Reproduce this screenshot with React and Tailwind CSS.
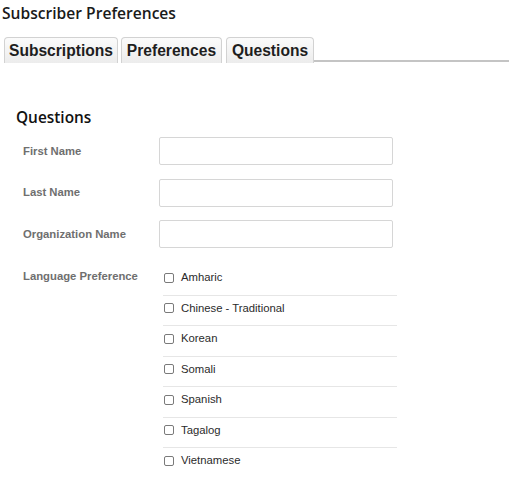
import React from "react";

const languages = [
  "Amharic",
  "Chinese - Traditional",
  "Korean",
  "Somali",
  "Spanish",
  "Tagalog",
  "Vietnamese",
];

const tabs = [
  { label: "Subscriptions", w: "w-[114px]", mr: "mr-[3px]" },
  { label: "Preferences", w: "w-[101px]", mr: "mr-[4px]" },
  { label: "Questions", w: "w-[88px]", mr: "mr-0" },
];

function Field({ label }) {
  return (
    <div className="flex items-center">
      <div className="w-[136px] text-[11.3px] font-bold text-[#6f6f6f]">{label}</div>
      <div className="w-[234px] h-[28px] border border-[#d6d6d6] rounded-[2px] bg-white" />
    </div>
  );
}

export default function App() {
  return (
    <div
      className="w-[512px] h-[487px] bg-white overflow-hidden"
      style={{ fontFamily: '"Liberation Sans", Arial, sans-serif' }}
    >
      <h1
        className="pl-[2px] pt-[2px] text-[15.6px] leading-[22px] font-semibold text-[#1a1a1a]"
        style={{ fontFamily: '"Open Sans", sans-serif' }}
      >
        Subscriber Preferences
      </h1>
      <div className="mt-[13px] flex items-end pl-[4px] pr-[3px]">
        {tabs.map((t) => (
          <div
            key={t.label}
            className={`${t.w} ${t.mr} h-[26px] flex items-center justify-center border border-b-0 border-[#d2d2d2] rounded-t-[4px] bg-gradient-to-b from-[#fbfbfb] to-[#ececec] text-[15.6px] font-bold text-[#1e1e1e]`}
          >
            {t.label}
          </div>
        ))}
        <div className="flex-1 h-[2px] bg-[#c4c4c4] mb-[1px]" />
      </div>

      <h2
        className="mt-[44px] pl-[16px] text-[15.4px] leading-[22px] font-semibold text-[#111]"
        style={{ fontFamily: '"Open Sans", sans-serif' }}
      >
        Questions
      </h2>

      <div className="mt-[8px] pl-[23px] flex flex-col gap-[13.5px]">
        <Field label="First Name" />
        <Field label="Last Name" />
        <Field label="Organization Name" />
      </div>

      <div className="mt-[17px] pl-[23px] flex items-start">
        <div className="w-[140px] pt-[3px] text-[11.3px] font-bold text-[#6f6f6f]">
          Language Preference
        </div>
        <div className="w-[234px] flex flex-col">
          {languages.map((l, i) => (
            <div
              key={l}
              className={`h-[30.5px] flex items-start pt-[6px] ${
                i < languages.length - 1 ? "border-b border-[#e6e6e6]" : ""
              }`}
            >
              <div className="h-[13px] flex items-center">
                <span className="ml-[1px] w-[10px] h-[10px] border border-[#7a7a7a] rounded-[2px] bg-white" />
                <span className="ml-[7px] text-[11.3px] text-[#2b2b2b]">{l}</span>
              </div>
            </div>
          ))}
        </div>
      </div>
    </div>
  );
}
